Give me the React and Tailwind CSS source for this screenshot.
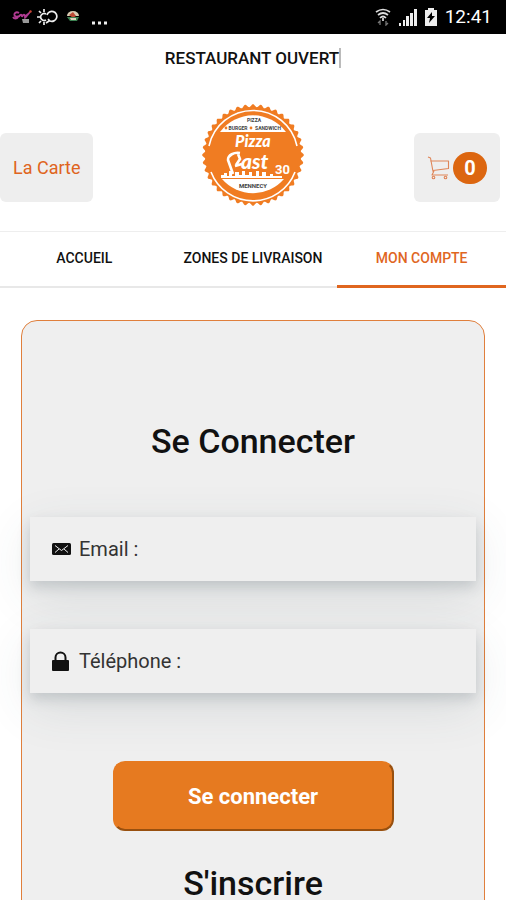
import React, { useState } from "react";

const tabs = ["ACCUEIL", "ZONES DE LIVRAISON", "MON COMPTE"];

// outline of the round badge with scalloped edge
const badgeEdge = () => {
  const points = [];
  for (let i = 0; i < 720; i++) {
    const a = (i * Math.PI) / 360;
    const r = 49.4 + 1.4 * Math.cos(a * 40);
    points.push(`${(51 + r * Math.cos(a)).toFixed(2)},${(51 + r * Math.sin(a)).toFixed(2)}`);
  }
  return points.join(" ");
};

const Logo = () => (
  <svg viewBox="0 0 102 102" className="w-[102px] h-[102px]" role="img" aria-label="Pizza Fast 30">
    <polygon points={badgeEdge()} fill="#f07c22" />
    <path d="M7 42a45 45 0 0 1 88 0" fill="none" stroke="#fff" strokeWidth="1.6" />
    <path d="M9 68a45 45 0 0 0 84 0" fill="none" stroke="#fff" strokeWidth="1.6" />
    <path d="M18 28A41 41 0 0 1 84 28Z" fill="#fff" />
    <path d="M20 75A41 41 0 0 0 82 75Z" fill="#fff" />
    <g fontFamily="Roboto, sans-serif" fontWeight="700" fill="#444" textAnchor="middle">
      <text x="52" y="18" fontSize="5">PIZZA</text>
      <text x="36" y="26" fontSize="5">BURGER</text>
      <text x="66" y="26" fontSize="5">SANDWICH</text>
      <text x="51" y="84" fontSize="6">MENNECY</text>
    </g>
    <circle cx="24" cy="24" r="1.4" fill="#f07c22" />
    <circle cx="49" cy="24" r="1.4" fill="#f07c22" />
    <g fontFamily="Lato, sans-serif" fontWeight="900" fontStyle="italic" fill="#fff">
      <text x="33" y="43" fontSize="16">Pizza</text>
      <text x="39" y="65" fontSize="21">ast</text>
    </g>
    {/* pizza slice in front of "ast" */}
    <path d="M38 49c-6-1-12 2-12 7l5 14M36 50l2 5-4 6M40 60l-7 2" fill="none" stroke="#fff" strokeWidth="2.6" />
    <text x="73" y="70" fontSize="13" fontFamily="Roboto, sans-serif" fontWeight="700" fill="#fff">30</text>
    {/* skyline */}
    <path d="M19 74v-3h3v-2h3v3h2v-5h3v5h3v-4h4v3h3v-4h3v4h4v-3h3v4h4v-5h3v5h3v-4h4v4h4v-2h3v2h9v2z" fill="#fff" />
  </svg>
);

const CartIcon = () => (
  <svg viewBox="0 0 24 24" className="w-6 h-6" fill="none" stroke="#df8558" strokeWidth="1.1" strokeLinejoin="round">
    <path d="M1 1l2.500 1L6 15.500h1" />
    <path d="M3.500 5h18v7.500L6 14.500" />
    <path d="M7 15l-2 4h16" />
    <circle cx="6.500" cy="21.500" r="1.300" />
    <circle cx="18.500" cy="21.500" r="1.300" />
  </svg>
);

const StatusBar = () => (
  <div className="bg-black text-white h-[34px] shrink-0 flex items-center justify-between pl-3 pr-[14px]">
    <div className="flex items-center gap-1">
      <svg viewBox="0 0 20 14" className="w-5 h-[14px]" fill="none">
        <path d="M7 3C4 1 1 4 3 6s4-1 3 1-4 2-5 0M7 7c1-3 3-3 3 0 1-3 3-3 3 0l3-3m-3 4 5-6" stroke="#b03a91" strokeWidth="1.800" />
        <path d="M10 9h7v4h-6z" fill="#999" />
        <circle cx="18.500" cy="1.500" r="1.200" fill="#c43" />
      </svg>
      <svg viewBox="0 0 22 18" className="w-[22px] h-[18px]" fill="none" stroke="#eee" strokeWidth="1.700">
        <path d="M10 12a3.500 3.500 0 1 1 0-6M1 9h3M3 3l2 2M8 1v3M3 15l2-2M8 17v-3M11 7a5 5 0 1 1 3 6l-2-2M10 15l3-2" />
      </svg>
      <svg viewBox="0 0 14 14" className="w-[14px] h-[14px] ml-1">
        <path d="M1 6a6 5 0 0 1 12 0z" fill="#d9ccb4" />
        <path d="M3 5l4-3 3 4-3 2z" fill="#bd4a36" />
        <path d="M1 7h12l-2 4H4z" fill="#3b8150" />
        <path d="M4 8h6v2H5z" fill="#ded3bd" />
      </svg>
      <svg viewBox="0 0 16 4" className="w-4 h-1 ml-2 mt-3" fill="#eee">
        <path d="M0 .5h3v3H0zM6 .5h3v3H6zM12 .5h3v3h-3z" />
      </svg>
    </div>
    <div className="flex items-center gap-1">
      <svg viewBox="0 0 16 18" className="w-4 h-[18px] mr-1" fill="none" stroke="#ddd" strokeWidth="1.700">
        <path d="M1 4q7-5 14 0M3 7q5-4 10 0M5 10q3-3 6 0" />
        <path d="M8 10v3" />
        <path d="M5 17v-4l-2 2M11 13v4l2-2" stroke="#777" strokeWidth="1.300" />
      </svg>
      <svg viewBox="0 0 18 18" className="w-[18px] h-[18px]" fill="#eee">
        <path d="M0 15h2v3H0zM4 12h2v6H4zM7 8h3v10H7zM11 5h3v13h-3zM15 1h3v17h-3z" />
      </svg>
      <svg viewBox="0 0 12 18" className="w-3 h-[18px] mx-1">
        <path d="M3 0h6v2h3v16H0V2h3z" fill="#eee" />
        <path d="M7 4l-5 6h3l-1 5 6-7H7z" fill="#000" />
      </svg>
      <span className="text-[19px] leading-6">12:41</span>
    </div>
  </div>
);

const MailIcon = () => (
  <svg viewBox="0 0 19 12" className="w-[19px] h-3 shrink-0">
    <rect width="19" height="12" rx="1.500" fill="#111" />
    <path d="M3 2.500l6.500 5 6.500-5M3 9.500l4-3.500M16 9.500l-4-3.500" fill="none" stroke="#eee" strokeWidth="1" />
  </svg>
);

const LockIcon = () => (
  <svg viewBox="0 0 17 20" className="w-[17px] h-5 shrink-0">
    <path d="M3.500 10V6.500a5 5 0 0 1 10 0V10" fill="none" stroke="#111" strokeWidth="2" />
    <rect y="9" width="17" height="11" rx="1" fill="#111" />
  </svg>
);

const Field = ({ id, type, label, icon, value, onChange }) => (
  <div className="h-16 flex items-center bg-[#efefef] pl-[22px] pr-4 shadow-[0_6px_12px_rgba(70,85,95,0.20),0_14px_50px_rgba(60,80,90,0.12)]">
    <div className="w-[27px] shrink-0">{icon}</div>
    <label htmlFor={id} className="text-[20px] leading-6 text-[#333] whitespace-nowrap">
      {label}
    </label>
    <input
      id={id}
      type={type}
      value={value}
      onChange={(e) => onChange(e.target.value)}
      className="flex-1 min-w-0 ml-2 h-full bg-transparent outline-none text-[20px] text-[#333]"
    />
  </div>
);

const App = () => {
  const [email, setEmail] = useState("");
  const [phone, setPhone] = useState("");
  const [activeTab, setActiveTab] = useState("MON COMPTE");

  return (
    <div className="h-screen flex flex-col bg-white font-['Roboto',sans-serif] text-[#111]">
      <StatusBar />
      <div className="flex-1 min-h-0 overflow-y-auto [scrollbar-width:none]">
        <header>
          <p className="h-12 flex items-center justify-center text-[17px] leading-5 font-medium">
            <span className="border-r-2 border-[#bbb]">RESTAURANT OUVERT</span>
          </p>
          <div className="grid grid-cols-3 items-end pt-[22px] pb-[25px]">
            <a
              href="#carte"
              className="justify-self-start mb-1 h-[69px] px-[13px] flex items-center rounded-md bg-[#eee] text-[18px] text-[#df6420]"
            >
              La Carte
            </a>
            <div className="justify-self-center">
              <Logo />
            </div>
            <button
              type="button"
              aria-label="Panier"
              className="justify-self-end mb-1 mr-[6px] w-[86px] h-[69px] flex items-center justify-center gap-[2px] rounded-md bg-[#eee]"
            >
              <CartIcon />
              <span className="h-8 w-[34px] flex items-center justify-center rounded-full bg-[#dc6610] text-[20px] font-bold text-white">
                0
              </span>
            </button>
          </div>
          <nav className="grid grid-cols-3 border-t border-[#eee]">
            {tabs.map((tab) => (
              <a
                key={tab}
                href="#"
                onClick={() => setActiveTab(tab)}
                className={
                  activeTab === tab
                    ? "h-14 pb-px flex items-center justify-center border-b-3 border-[#e0661f] text-[14px] font-medium text-[#e0661f]"
                    : "h-14 pb-[2px] flex items-center justify-center border-b-2 border-[#e8e8e8] text-[14px] font-medium"
                }
              >
                {tab}
              </a>
            ))}
          </nav>
        </header>

        <main className="mx-[21px] mt-8 mb-8 px-2 pb-16 rounded-2xl border border-[#e07f3c] bg-[#efefef]">
          <form onSubmit={(e) => e.preventDefault()}>
            <h1 className="pt-[100px] text-center text-[34px] leading-10 font-medium">Se Connecter</h1>
            <div className="mt-14 flex flex-col gap-12">
              <Field id="email" type="email" label="Email :" icon={<MailIcon />} value={email} onChange={setEmail} />
              <Field id="phone" type="tel" label="Téléphone :" icon={<LockIcon />} value={phone} onChange={setPhone} />
            </div>
            <button
              type="submit"
              className="block mx-auto mt-[68px] w-[281px] h-[70px] rounded-xl bg-[#e67a20] border-2 border-t-[#e67a20] border-l-[#e67a20] border-r-[#98500f] border-b-[#98500f] text-[22px] font-bold text-white"
            >
              Se connecter
            </button>
          </form>
          <h2 className="mt-8 text-center text-[34px] leading-10 font-medium">S'inscrire</h2>
        </main>
      </div>
    </div>
  );
};

export default App;
